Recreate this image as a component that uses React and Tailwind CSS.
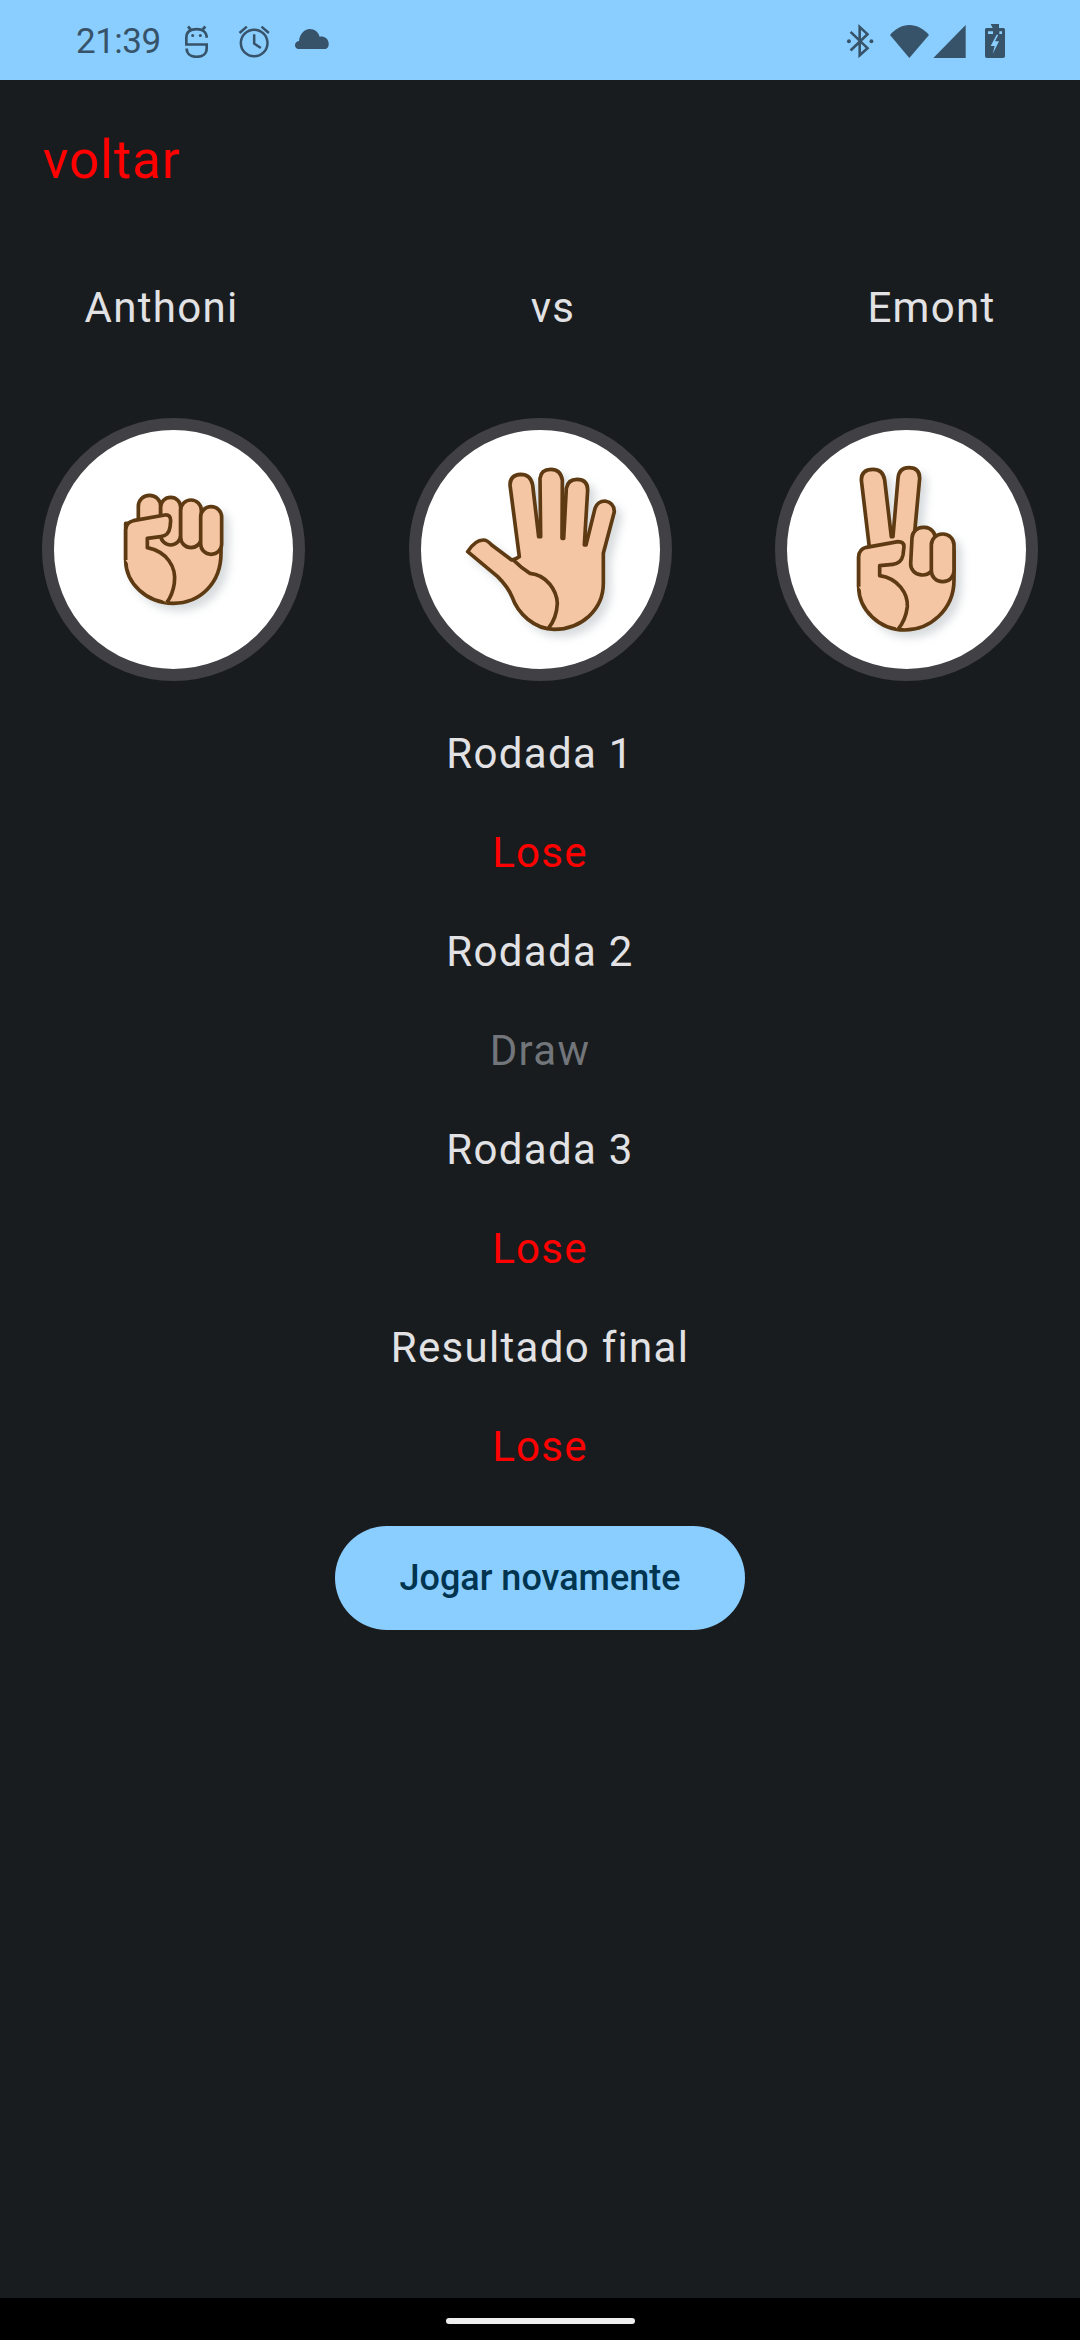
const skin = "#F4C6A3";
const line = "#5E3A12";

const TimeIcons = () => (
  <div className="flex items-center pt-[3px]">
    <span className="w-[84px] text-[35px] leading-none text-[#37536A] font-['Roboto',sans-serif] tracking-[-0.5px]">21:39</span>
    <svg className="w-[23px] h-[33px] ml-[25px]" viewBox="43 30 69 98" fill="none" stroke="#37536A" strokeWidth="8">
      <path d="M108 68C108 50 95 42 78 42 60 42 47 50 47 68V88H108V100C108 116 95 125 78 125 61 125 48 116 48 100" />
      <path d="M52 34l8 9M104 34l-8 9" />
      <circle cx="66" cy="61" r="4.5" fill="#37536A" stroke="none" />
      <circle cx="89" cy="61" r="4.5" fill="#37536A" stroke="none" />
    </svg>
    <svg className="w-[33px] h-[33px] ml-[30px]" viewBox="690 76 96 99" fill="none" stroke="#37536A" strokeWidth="7.5">
      <circle cx="737" cy="130" r="40" />
      <path d="M737 104v28l20 13M715 81l-22 19M759 81l22 19" />
    </svg>
    <svg className="w-[36px] h-[20px] ml-[23px] mb-[5px]" viewBox="855 92 102 60" fill="#37536A">
      <path d="M866 152c-7 0-11-5-11-11 0-7 4-12 12-13 2-20 16-36 32-36 15 0 26 9 30 23 14-2 25 5 27 19 1 10-3 18-12 18z" />
    </svg>
  </div>
);

const SystemIcons = () => (
  <div className="flex items-center pt-[2px]">
    <svg className="w-[28px] h-[34px]" viewBox="198 72 86 102" fill="none" stroke="#37536A" strokeWidth="8">
      <path d="M212 95l52 50-24 22V80l24 22-52 50" />
      <circle cx="207" cy="124" r="6" fill="#37536A" stroke="none" />
      <circle cx="276" cy="124" r="6" fill="#37536A" stroke="none" />
    </svg>
    <svg className="w-[39px] h-[33px] ml-[16px]" viewBox="330 72 117 99" fill="#37536A">
      <path d="M330 102c15-18 36-30 58-30s44 12 59 30l-59 69z" />
    </svg>
    <svg className="w-[33px] h-[33px] ml-[4px]" viewBox="458 72 97 99" fill="#37536A">
      <path d="M458 171l97-99v99z" />
    </svg>
    <svg className="w-[20px] h-[34px] ml-[19px]" viewBox="612 72 60 102">
      <path d="M629 72h25v12h12c4 0 6 2 6 6v78c0 4-2 6-6 6h-48c-4 0-6-2-6-6V90c0-4 2-6 6-6h17z" fill="#37536A" />
      <path d="M647 104l-18 34h12l-6 24 19-38h-12l10-20z" fill="#8ACEFF" />
      <path d="M621 94h15v8h-15zM655 94h8v8h-8z" fill="#8ACEFF" />
    </svg>
  </div>
);

// hand drawings use the coordinates of a 3x crop of each circle
const Rock = () => (
  <svg className="w-[239px] h-[239px] drop-shadow-[6px_6px_4px_rgba(60,80,90,0.2)]" viewBox="72 60 717 717" fill={skin} stroke={line} strokeWidth="11" strokeLinejoin="round">
    <path d="M287 360V450C287 520 350 580 430 580 510 580 573 520 573 430V340H287z" />
    <rect x="325" y="256" width="67" height="110" rx="33" />
    <rect x="392" y="262" width="60" height="143" rx="30" />
    <rect x="452" y="270" width="62" height="143" rx="31" />
    <rect x="512" y="290" width="63" height="143" rx="31" />
    <path d="M288 360q0-23 22-28l95-17q17-2 17 17l-2 20q-4 26-28 28l-40 5v28c58 12 88 57 81 107q-5 35-23 58L350 540 287 450z" stroke="none" />
    <path d="M287 450V360q1-23 23-28l95-17q17-2 17 17l-2 20q-4 26-28 28l-40 5v28c58 12 88 57 81 107q-5 35-23 58" fill="none" />
  </svg>
);

const Paper = () => (
  <svg className="w-[239px] h-[239px] drop-shadow-[6px_6px_4px_rgba(60,80,90,0.2)]" viewBox="63 60 717 717" fill={skin} stroke={line} strokeWidth="11" strokeLinejoin="round">
    <path d="M203 425q22-35 47-35 12 0 25 15l60 45q14-2 23-10L330 225q0-30 32-32 30 0 36 32l18 155h6l-2-175q3-27 32-27 30 0 35 32l-1 175h5l8-150q5-27 32-27 32 0 32 32l-10 165h5l27-110q8-22 30-22 28 5 28 32l-33 125v90c0 80-67 138-147 138-60 0-110-48-127-98q-13-30-43-60z" />
    <path d="M340 450q25 25 50 40c50 5 80 50 82 90q-2 45-27 75" fill="none" />
  </svg>
);

const Scissors = () => (
  <svg className="w-[239px] h-[239px] drop-shadow-[6px_6px_4px_rgba(60,80,90,0.2)]" viewBox="52 60 717 717" fill={skin} stroke={line} strokeWidth="11" strokeLinejoin="round">
    <path d="M300 420L275 210q0-32 35-32 30 0 35 32l20 170h5l15-175q3-32 33-32 32 0 32 32l-20 215H553V510C553 600 480 660 405 660 330 660 267 600 267 530V440z" />
    <rect x="425" y="352" width="70" height="143" rx="33" transform="rotate(3 460 423)" />
    <rect x="485" y="372" width="68" height="143" rx="33" />
    <path d="M267 440q1-22 23-28l95-17q18 0 18 15l-3 25q-5 25-30 28l-40 4v30c55 8 85 53 83 93q-5 40-28 68L320 600 267 530z" stroke="none" />
    <path d="M267 530V440q1-22 23-28l95-17q18 0 18 15l-3 25q-5 25-30 28l-40 4v30c55 8 85 53 83 93q-5 40-28 68" fill="none" />
  </svg>
);

const HandCircle = ({ children }) => (
  <div className="w-[263px] h-[263px] rounded-full border-[12px] border-[#414145] bg-white flex items-center justify-center shrink-0">
    {children}
  </div>
);

const rows = [
  { text: "Rodada 1", color: "text-[#E2E2E5]" },
  { text: "Lose", color: "text-[#FF0000]" },
  { text: "Rodada 2", color: "text-[#E2E2E5]" },
  { text: "Draw", color: "text-[#72757A]" },
  { text: "Rodada 3", color: "text-[#E2E2E5]" },
  { text: "Lose", color: "text-[#FF0000]" },
  { text: "Resultado final", color: "text-[#E2E2E5]" },
  { text: "Lose", color: "text-[#FF0000]" },
];

export default function App() {
  return (
    <div className="w-[1080px] h-[2340px] flex flex-col bg-[#191C1E] font-['Roboto',sans-serif] overflow-hidden">
      <div className="h-[80px] shrink-0 bg-[#8ACEFF] flex items-center justify-between pl-[76px] pr-[75px]">
        <TimeIcons />
        <SystemIcons />
      </div>

      <div className="flex-1 flex flex-col">
        <div className="pl-[43px] pt-[48px] h-[156px]">
          <span className="text-[53px] leading-[64px] text-[#FF0000] tracking-[0.9px]">voltar</span>
        </div>

        <div className="flex h-[63px] mt-[40px] text-[42px] leading-[63px] tracking-[1.3px] text-[#E2E2E5]">
          <span className="w-[323px] text-center">Anthoni</span>
          <span className="w-[460px] text-center">vs</span>
          <span className="w-[297px] text-center">Emont</span>
        </div>

        <div className="flex justify-between px-[42px] mt-[79px]">
          <HandCircle><Rock /></HandCircle>
          <HandCircle><Paper /></HandCircle>
          <HandCircle><Scissors /></HandCircle>
        </div>

        <div className="flex flex-col items-center gap-[36px] mt-[41px]">
          {rows.map((row, i) => (
            <span key={i} className={`text-[42px] leading-[63px] tracking-[1.3px] ${row.color}`}>
              {row.text}
            </span>
          ))}
        </div>

        <div className="flex justify-center mt-[48px]">
          <button className="w-[410px] h-[104px] rounded-full bg-[#8ACEFF] text-[#00344F] text-[36px] font-medium">
            Jogar novamente
          </button>
        </div>
      </div>

      <div className="h-[42px] shrink-0 bg-black flex justify-center pt-[20px]">
        <div className="w-[189px] h-[6px] rounded-full bg-[#EEEEEE]" />
      </div>
    </div>
  );
}
